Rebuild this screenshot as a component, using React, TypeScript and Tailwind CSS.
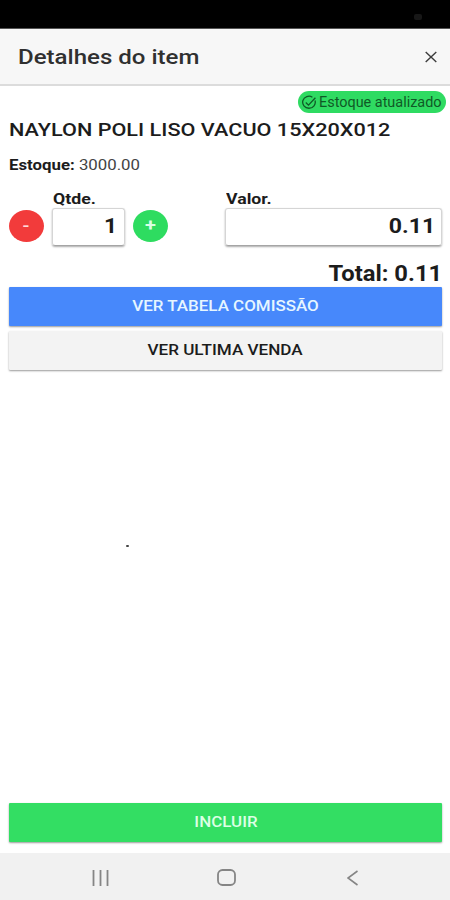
import { useState } from "react";

export default function App() {
  const [qty, setQty] = useState(1);
  const price = 0.11;

  return (
    <div className="flex h-[900px] w-[450px] flex-col overflow-hidden bg-white font-['Roboto',sans-serif] text-[#1c1c1c]">
      {/* Status bar */}
      <div className="flex h-[29px] shrink-0 items-center justify-end border-b border-[#555] bg-black pt-1.5 pr-7">
        <span className="h-1.5 w-2 rounded-xs bg-[#171717]" />
      </div>

      <header className="flex h-[57px] shrink-0 items-center justify-between border-b-2 border-[#dcdcdc] bg-[#f7f7f7] pr-[13px] pl-[18px]">
        <h1 className="mt-0.5 origin-left scale-x-[1.145] text-[21px] font-medium whitespace-nowrap text-[#303030]">
          Detalhes do item
        </h1>
        <button aria-label="Fechar">
          <svg className="h-3 w-3" viewBox="0 0 12 12" fill="none" stroke="#3c3c3c" strokeWidth="1.4">
            <path d="M.7 1l10.600 10M11.300 1L.7 11" />
          </svg>
        </button>
      </header>

      <main className="flex grow flex-col pr-2 pl-[9px]">
        <div className="-mr-1 mt-[5px] flex h-[22px] w-[148px] items-center self-end rounded-[11px] bg-[#2fdb62] pl-[3px] text-[#0f5a26]">
          <svg className="h-[15px] w-4 shrink-0" viewBox="0 0 16 15" fill="none" stroke="currentColor" strokeWidth="1.3">
            <path d="M14 5.500A6.300 6 0 1 1 11.400 2.200" />
            <path d="M4.800 7.500l2.700 2.600L14.400 2.800" />
          </svg>
          <span className="ml-0.5 w-[119px] origin-left scale-x-[1.03] text-[14px] whitespace-nowrap">
            Estoque atualizado
          </span>
        </div>

        <h2 className="mt-[5px] h-6 origin-left scale-x-[1.14] self-start text-[19px] leading-6 font-medium whitespace-nowrap">
          NAYLON POLI LISO VACUO 15X20X012
        </h2>
        <p className="mt-[13px] h-5 origin-left scale-x-[1.2] self-start text-[14px] leading-5 text-[#444]">
          <b className="text-[#1c1c1c]">Estoque:</b> 3000.00
        </p>

        <div className="mt-[14px] flex h-[57px] items-end">
          <button
            className="mb-1 h-8 w-[35px] rounded-[50%] bg-[#f23b3b] text-[15px] font-bold text-[#ffd9d9]"
            onClick={() => setQty(Math.max(1, qty - 1))}
          >
            <span className="inline-block scale-x-125">-</span>
          </button>
          <label className="ml-2 w-[73px]">
            <span className="ml-px block h-[18px] w-max origin-left scale-x-[1.18] text-[15px] leading-[18px] font-bold">
              Qtde.
            </span>
            <span className="flex h-[38px] items-center justify-end rounded-[3px] border border-[#d5d5d5] border-b-[#a5a5a5] pr-[7px] shadow-[0_1px_2px_#00000055]">
              <span className="origin-right scale-x-[1.09] text-[21px] font-bold">{qty}</span>
            </span>
          </label>
          <button
            className="mb-1 ml-2 h-8 w-[35px] rounded-[50%] bg-[#2edc60] text-[16px] font-bold text-[#d9ffe4]"
            onClick={() => setQty(qty + 1)}
          >
            <span className="inline-block scale-x-125">+</span>
          </button>
          <label className="ml-[57px] w-[218px]">
            <span className="ml-px block h-[18px] w-max origin-left scale-x-[1.18] text-[15px] leading-[18px] font-bold">
              Valor.
            </span>
            <span className="flex h-[38px] items-center justify-end rounded-[3px] border border-[#d5d5d5] border-b-[#a5a5a5] pr-1.5 shadow-[0_1px_2px_#00000055]">
              <span className="origin-right scale-x-[1.1] text-[21px] font-bold">{price.toFixed(2)}</span>
            </span>
          </label>
        </div>

        <p className="mt-[15px] h-[26px] origin-right scale-x-[1.08] self-end text-[22px] leading-[26px] font-bold whitespace-nowrap">
          Total: {(qty * price).toFixed(2)}
        </p>

        <button className="h-[39px] w-full rounded-[1px] bg-[#4788fb] text-[15px] font-medium text-[#e6f6ff] shadow-[0_1px_2px_#00000066]">
          <span className="inline-block scale-x-[1.13]">VER TABELA COMISSÃO</span>
        </button>
        <button className="mt-[5px] h-[39px] w-full rounded-[1px] bg-[#f3f3f3] text-[15px] font-medium shadow-[0_1px_2px_#00000066]">
          <span className="inline-block scale-x-[1.14]">VER ULTIMA VENDA</span>
        </button>

        <span className="mt-[175px] ml-[117px] h-0.5 w-[3px] rounded-full bg-[#444]" />

        <button className="mt-auto mb-[11px] h-[39px] w-full rounded-[1px] bg-[#33de63] text-[15px] font-medium text-[#dcffe5] shadow-[0_1px_2px_#00000066]">
          <span className="inline-block scale-x-[1.13]">INCLUIR</span>
        </button>
      </main>

      {/* Android navigation */}
      <nav className="flex h-[47px] shrink-0 items-center bg-[#f1f1f1] pt-0.5 text-[#858585]">
        <svg className="ml-[92px] h-4 w-[17px]" viewBox="0 0 17 16" stroke="currentColor" strokeWidth="1.8">
          <path d="M1.500 0v16M8.500 0v16M15.500 0v16" />
        </svg>
        <svg className="ml-[108px] h-[17px] w-[19px]" viewBox="0 0 19 17" fill="none" stroke="currentColor" strokeWidth="1.800">
          <rect x="1" y="1" width="17" height="15" rx="4.500" />
        </svg>
        <svg className="ml-[111px] h-4 w-3" viewBox="0 0 12 16" fill="none" stroke="currentColor" strokeWidth="1.600">
          <path d="M10.500 1L1 8l9.500 7" />
        </svg>
      </nav>
    </div>
  );
}
